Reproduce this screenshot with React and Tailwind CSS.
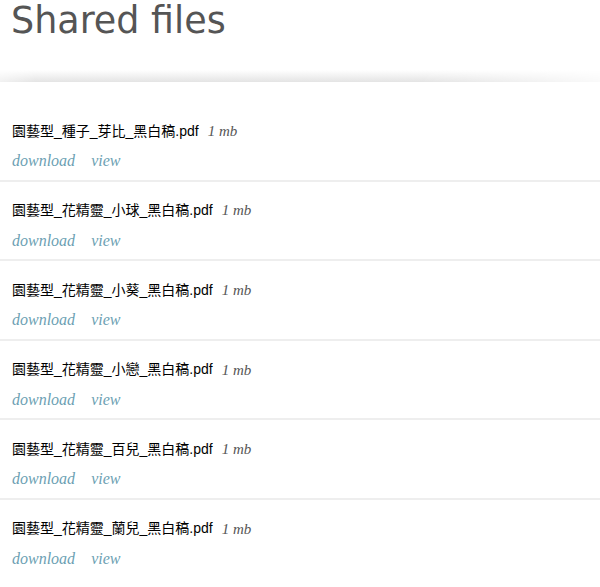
import React from 'react';

const files = [
    '園藝型_種子_芽比_黑白稿.pdf',
    '園藝型_花精靈_小球_黑白稿.pdf',
    '園藝型_花精靈_小葵_黑白稿.pdf',
    '園藝型_花精靈_小戀_黑白稿.pdf',
    '園藝型_花精靈_百兒_黑白稿.pdf',
    '園藝型_花精靈_蘭兒_黑白稿.pdf',
];

const App = () => {
    return (
        <div className="min-h-screen bg-white">
            <div className="h-[82px] flex flex-col">
                <h1 className="px-[11px] pt-[3px] text-[36.5px] leading-[36px] text-[#555] font-['DejaVu_Sans',sans-serif]">Shared files</h1>
                {/* soft shadow band under the header */}
                <div className="mt-auto h-[12px] bg-gradient-to-b from-white to-[#e4e4e4] [mask-image:linear-gradient(to_right,rgba(0,0,0,0.5),black_6%,black_70%,rgba(0,0,0,0.2))]"></div>
            </div>
            <ul className="mt-[20px]">
                {files.map((name) => (
                    <li key={name} className="h-[79.6px] pt-[19px] px-[12px] border-b-2 border-[#eee] last:border-b-0">
                        <div className="h-[20px] flex items-center gap-[9px]">
                            <span className="text-[14px] text-black font-['Liberation_Sans','Noto_Sans_CJK_TC',sans-serif]">{name}</span>
                            <span className="text-[15px] italic text-[#555] font-['Liberation_Serif',serif]">1 mb</span>
                        </div>
                        <div className="h-[20px] mt-[10px] flex items-center gap-[16px] text-[16px] italic text-[#6c9fb3] font-['Liberation_Serif',serif]">
                            <a href="#">download</a>
                            <a href="#">view</a>
                        </div>
                    </li>
                ))}
            </ul>
        </div>
    );
};

export default App;
